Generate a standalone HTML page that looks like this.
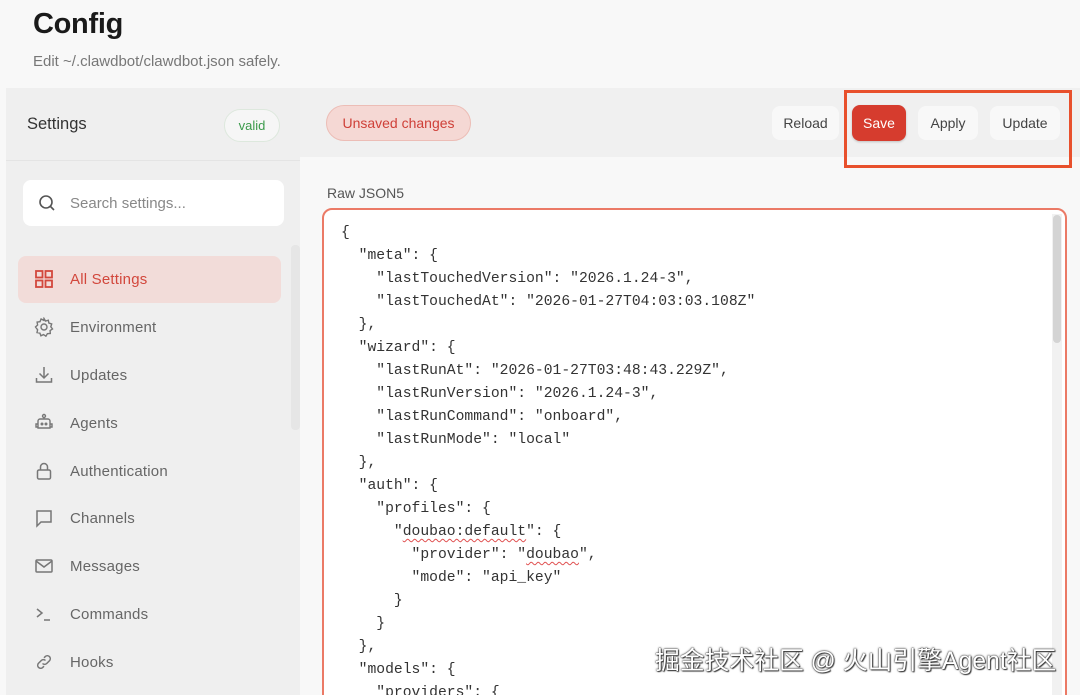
<!DOCTYPE html>
<html><head><meta charset="utf-8"><style>
*{box-sizing:border-box;margin:0;padding:0}
html,body{width:1080px;height:695px;overflow:hidden}
body{background:#f8f8f8;font-family:"Liberation Sans",sans-serif;position:relative;color:#333}
.abs{position:absolute}
h1{position:absolute;left:33px;top:8px;font-size:29px;font-weight:bold;color:#1a1a1a;letter-spacing:-0.3px}
.sub{left:33px;top:53px;font-size:15px;color:#777}
.card{left:6px;top:88px;width:1074px;height:607px;background:#f0f0f0;border-radius:12px 0 0 0}
.side{left:6px;top:88px;width:294px;height:607px;background:#efefef}
.sidehead{left:6px;top:160px;width:294px;height:1px;background:#e4e4e4}
.main{left:300px;top:157px;width:780px;height:538px;background:#f8f8f8}
.pill{border-radius:18px;font-size:13px;text-align:center}
.btn{border-radius:8px;font-size:14px;text-align:center;line-height:34px;background:#f8f8f8;color:#444}
.item{left:18px;width:263px;height:47px;font-size:15px;color:#666;line-height:47px;padding-left:52px;letter-spacing:0.2px}
.item svg{position:absolute;left:16px;top:13px}
pre{position:absolute;left:341px;top:222px;font-family:"Liberation Mono",monospace;font-size:14.7px;line-height:23px;color:#333}
.sq{text-decoration:underline wavy #e05050;text-decoration-thickness:1px;text-underline-offset:3px}
.wm{left:655px;top:641px;font-family:"Liberation Sans","Noto Sans CJK SC",sans-serif;font-size:24.8px;color:#fff;text-shadow:0 0 2px #333,0 0 1px #000,1px 1px 1px #444;white-space:nowrap}
</style></head><body>
<h1>Config</h1>
<div class="abs sub">Edit ~/.clawdbot/clawdbot.json safely.</div>
<div class="abs card"></div>
<div class="abs side"></div>
<div class="abs sidehead"></div>
<div class="abs" style="left:27px;top:115px;font-size:16.5px;color:#333">Settings</div>
<div class="abs pill" style="left:224px;top:109px;width:56px;height:33px;line-height:31px;background:#f6f6f6;border:1px solid #dde8dd;color:#3a9a4a">valid</div>
<div class="abs" style="left:23px;top:180px;width:261px;height:46px;background:#fff;border-radius:8px"></div>
<svg class="abs" style="left:38px;top:194px" width="18" height="18" viewBox="0 0 18 18" fill="none" stroke="#555" stroke-width="1.6"><circle cx="8" cy="8" r="6"/><path d="M12.5 12.5L16 16"/></svg>
<div class="abs" style="left:70px;top:195px;font-size:15px;color:#888">Search settings...</div>
<div class="abs" style="left:291px;top:245px;width:9px;height:185px;background:#e6e6e6;border-radius:4px"></div>
<div class="abs item" style="top:256px;background:#f2dcd9;border-radius:8px;color:#d2473c">
<svg width="20" height="20" viewBox="0 0 20 20" fill="none" stroke="#d2473c" stroke-width="1.8"><rect x="2" y="2" width="6.5" height="6.5"/><rect x="11.5" y="2" width="6.5" height="6.5"/><rect x="2" y="11.5" width="6.5" height="6.5"/><rect x="11.5" y="11.5" width="6.5" height="6.5"/></svg>All Settings</div>
<div class="abs item" style="top:304px"><svg width="20" height="20" viewBox="0 0 20 20" fill="none" stroke="#777" stroke-width="1.4"><circle cx="10" cy="10" r="3"/><path d="M10 1.5l1.5 2.5 2.8-.8.6 2.9 2.8.9-.9 2.8 1.7 2.2-2.4 1.6.2 2.9-2.9.2-1.5 2.5-2.4-1.6-2.6 1.2-1-2.7-2.9-.5.6-2.8L1.5 10l2.1-2-.5-2.9 2.9-.4 1.1-2.7 2.6 1.3z"/></svg>Environment</div>
<div class="abs item" style="top:352px"><svg width="20" height="20" viewBox="0 0 20 20" fill="none" stroke="#777" stroke-width="1.5"><path d="M10 2v11M5.5 8.5L10 13l4.5-4.5M2.5 13v4h15v-4"/></svg>Updates</div>
<div class="abs item" style="top:400px"><svg width="20" height="20" viewBox="0 0 20 20" fill="none" stroke="#777" stroke-width="1.4"><circle cx="10" cy="3" r="1.5"/><path d="M10 4.5V6M4 8a2 2 0 012-2h8a2 2 0 012 2v7H4zM4 11H2v3h2M16 11h2v3h-2"/><circle cx="8" cy="11" r=".8"/><circle cx="12" cy="11" r=".8"/></svg>Agents</div>
<div class="abs item" style="top:448px"><svg width="20" height="20" viewBox="0 0 20 20" fill="none" stroke="#777" stroke-width="1.5"><rect x="3.5" y="9" width="13" height="9" rx="1.5"/><path d="M6.5 9V6a3.5 3.5 0 017 0v3"/></svg>Authentication</div>
<div class="abs item" style="top:495px"><svg width="20" height="20" viewBox="0 0 20 20" fill="none" stroke="#777" stroke-width="1.5"><path d="M3 3h14v11H7l-4 4z"/></svg>Channels</div>
<div class="abs item" style="top:543px"><svg width="20" height="20" viewBox="0 0 20 20" fill="none" stroke="#777" stroke-width="1.5"><rect x="2" y="4" width="16" height="12" rx="1"/><path d="M2 5l8 6 8-6"/></svg>Messages</div>
<div class="abs item" style="top:591px"><svg width="20" height="20" viewBox="0 0 20 20" fill="none" stroke="#777" stroke-width="1.5"><path d="M3 5l5 4-5 4M10 16h6"/></svg>Commands</div>
<div class="abs item" style="top:639px"><svg width="20" height="20" viewBox="0 0 20 20" fill="none" stroke="#777" stroke-width="1.5"><path d="M8.5 11.5a3 3 0 004.2 0l3-3a3 3 0 00-4.2-4.2L10 5.8M11.5 8.5a3 3 0 00-4.2 0l-3 3a3 3 0 004.2 4.2l1.5-1.5"/></svg>Hooks</div>
<div class="abs main"></div>
<div class="abs pill" style="left:326px;top:105px;width:145px;height:36px;line-height:34px;background:#f5d8d4;border:1px solid #ecbdb6;color:#cf4038;font-size:14px">Unsaved changes</div>
<div class="abs btn" style="left:772px;top:106px;width:67px">Reload</div>
<div class="abs btn" style="left:852px;top:105px;width:54px;height:36px;line-height:36px;background:#d63c2e;color:#fff;box-shadow:0 1px 2px rgba(0,0,0,.2)">Save</div>
<div class="abs btn" style="left:918px;top:106px;width:60px">Apply</div>
<div class="abs btn" style="left:990px;top:106px;width:70px">Update</div>
<div class="abs" style="left:844px;top:90px;width:228px;height:78px;border:3px solid #e8502c"></div>
<div class="abs" style="left:327px;top:185px;font-size:14px;color:#555">Raw JSON5</div>
<div class="abs" style="left:322px;top:208px;width:745px;height:520px;background:#fff;border:2px solid #eb7a66;border-radius:10px"></div>
<div class="abs" style="left:1052px;top:214px;width:10px;height:481px;background:#f1f1f1"></div>
<div class="abs" style="left:1053px;top:215px;width:8px;height:128px;background:#d4d4d4;border-radius:4px"></div>
<pre>{
  "meta": {
    "lastTouchedVersion": "2026.1.24-3",
    "lastTouchedAt": "2026-01-27T04:03:03.108Z"
  },
  "wizard": {
    "lastRunAt": "2026-01-27T03:48:43.229Z",
    "lastRunVersion": "2026.1.24-3",
    "lastRunCommand": "onboard",
    "lastRunMode": "local"
  },
  "auth": {
    "profiles": {
      "<span class="sq">doubao:default</span>": {
        "provider": "<span class="sq">doubao</span>",
        "mode": "api_key"
      }
    }
  },
  "models": {
    "providers": {</pre>
<div class="abs wm">掘金技术社区 @ 火山引擎Agent社区</div>
</body></html>
